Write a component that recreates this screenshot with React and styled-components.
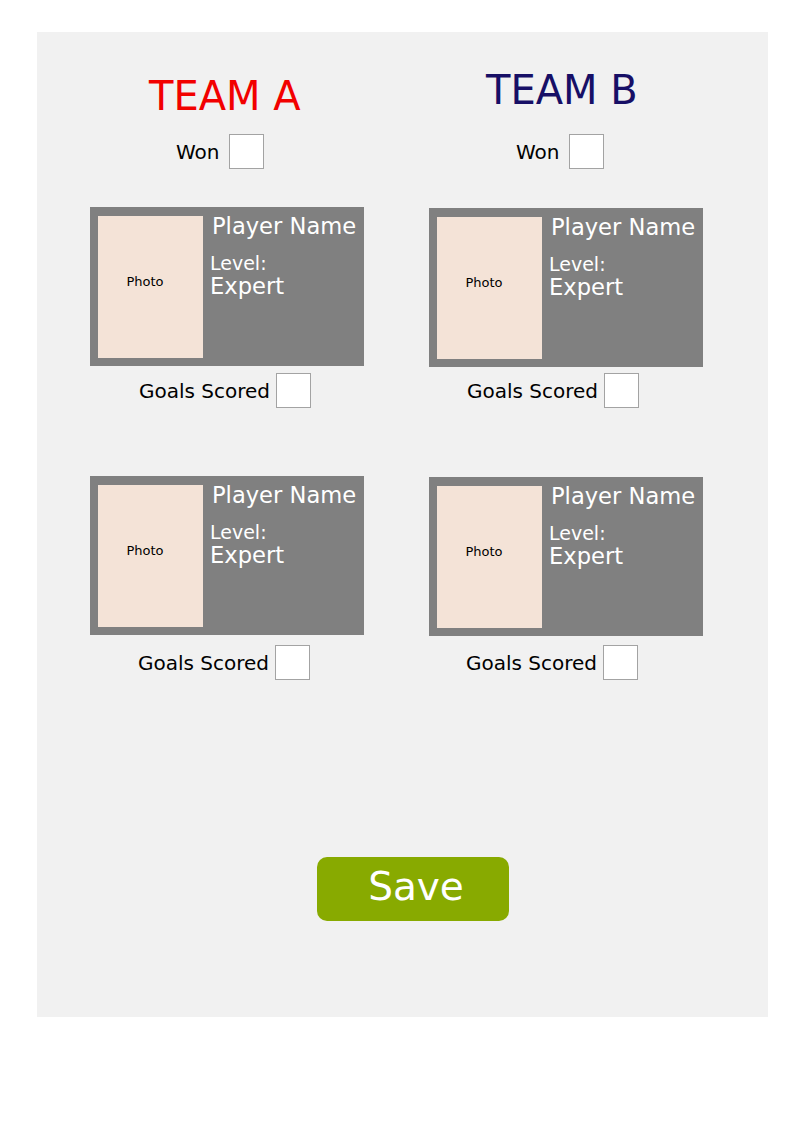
import React from 'react';
import styled, { createGlobalStyle } from 'styled-components';

const GlobalStyle = createGlobalStyle`
    body {
        margin: 0;
        background: #ffffff;
        font-family: "DejaVu Sans", "Liberation Sans", sans-serif;
    }
`;

const Panel = styled.div`
    box-sizing: border-box;
    margin: 32px 0 0 37px;
    width: 731px;
    height: 985px;
    padding-left: 53px;
    background-color: #f1f1f1;
    display: flex;
    flex-direction: column;
`;

const Teams = styled.div`
    display: grid;
    grid-template-columns: 274px 274px;
    column-gap: 65px;
`;

const Column = styled.div`
    display: flex;
    flex-direction: column;
`;

const Title = styled.h1`
    margin: ${p => 40 - p.$lift}px 0 ${p => 14 + p.$lift}px;
    padding-left: ${p => p.$indent}px;
    font-size: 40px;
    line-height: 48px;
    font-weight: 400;
    color: ${p => p.$color};
`;

const CheckRow = styled.label`
    display: flex;
    align-items: center;
    gap: ${p => p.$gap}px;
    margin-top: ${p => p.$top || 0}px;
    padding-left: ${p => p.$indent}px;
    font-size: 20px;
    color: #000000;
`;

const Box = styled.span`
    box-sizing: border-box;
    width: 35px;
    height: 35px;
    background: #ffffff;
    border: 1px solid #a3a3a3;
`;

const Player = styled.div`
    display: flex;
    flex-direction: column;
    margin-top: ${p => p.$top}px;
`;

const Card = styled.div`
    box-sizing: border-box;
    height: 159px;
    padding: 9px 8px 8px;
    display: flex;
    gap: 7px;
    background-color: #808080;
`;

const Photo = styled.div`
    box-sizing: border-box;
    flex: 0 0 105px;
    height: 142px;
    padding: 0 11px 12px 0;
    display: flex;
    align-items: center;
    justify-content: center;
    background-color: #f4e3d7;
    font-size: 13px;
    color: #000000;
`;

const Info = styled.div`
    display: flex;
    flex-direction: column;
    margin-top: -3px;
    color: #ffffff;
    white-space: nowrap;

    .name {
        padding-left: 2px;
        font-size: 22.6px;
        line-height: 26px;
        margin-bottom: 13px;
    }

    .level {
        font-size: 19px;
        line-height: 22px;
    }

    .value {
        font-size: 22.6px;
        line-height: 24px;
    }
`;

const SaveButton = styled.button`
    margin: 177px 0 0 227px;
    width: 192px;
    height: 64px;
    padding: 0 0 6px 6px;
    border: none;
    border-radius: 10px;
    background-color: #88aa00;
    color: #ffffff;
    font-family: inherit;
    font-size: 39px;
    cursor: pointer;
`;

const teams = [
    {
        name: 'TEAM A', color: '#f20000', indent: 59, lift: 0, wonIndent: 86,
        players: [{ top: 38, gap: 7, indent: 49 }, { top: 68, gap: 10, indent: 48 }],
    },
    {
        name: 'TEAM B', color: '#170f66', indent: 57, lift: 6, wonIndent: 87,
        players: [{ top: 39, gap: 6, indent: 38 }, { top: 69, gap: 9, indent: 37 }],
    },
];

const App = () => {
    return (
        <>
            <GlobalStyle />
            <Panel>
                <Teams>
                    {teams.map(team => (
                        <Column key={team.name}>
                            <Title $color={team.color} $indent={team.indent} $lift={team.lift}>{team.name}</Title>
                            <CheckRow $gap={9} $indent={team.wonIndent}>
                                Won <Box />
                            </CheckRow>

                            {team.players.map((player, i) => (
                                <Player key={i} $top={player.top}>
                                    <Card>
                                        <Photo>Photo</Photo>
                                        <Info>
                                            <span className='name'>Player Name</span>
                                            <span className='level'>Level:</span>
                                            <span className='value'>Expert</span>
                                        </Info>
                                    </Card>
                                    <CheckRow $gap={6} $top={player.gap} $indent={player.indent}>
                                        Goals Scored <Box />
                                    </CheckRow>
                                </Player>
                            ))}
                        </Column>
                    ))}
                </Teams>

                <SaveButton>Save</SaveButton>
            </Panel>
        </>
    );
};

export default App;
